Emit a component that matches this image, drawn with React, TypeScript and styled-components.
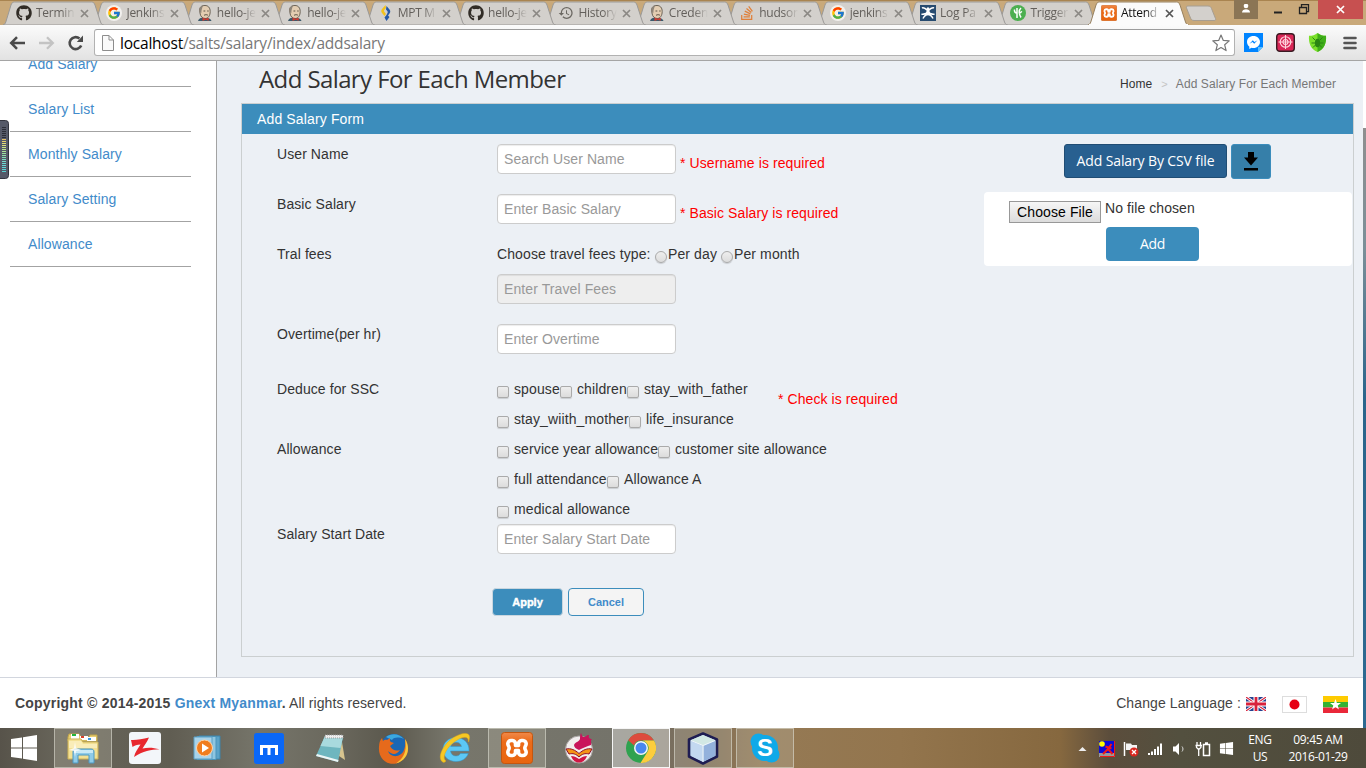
import React from "react";
import styled, { createGlobalStyle, css } from "styled-components";
import { FaGithub, FaStackOverflow, FaWindows } from "react-icons/fa";
import { FcGoogle } from "react-icons/fc";
import { MdHistory } from "react-icons/md";

const GlobalStyle = createGlobalStyle`
  * { box-sizing: border-box; }
  body {
    margin: 0;
    overflow: hidden;
    background: #fff;
    font: 14px/20px "Liberation Sans", Arial, sans-serif;
    color: #333;
  }
`;

const uiFont = css`
  font-family: "Open Sans", "Noto Sans", sans-serif;
`;

const Screen = styled.div`
  width: 1366px;
  height: 768px;
  display: flex;
  flex-direction: column;
  overflow: hidden;
`;

/* ---------- Browser chrome ---------- */

const TabStrip = styled.div`
  height: 25px;
  flex: none;
  display: flex;
  background: #c9a97a;
  border-top: 1px solid #a98450;
  padding-left: 3px;
  position: relative;
`;

const TabBox = styled.div<{ $active?: boolean; $order: number }>`
  position: relative;
  width: 100px;
  height: 24px;
  flex: none;
  margin-right: -9.6px;
  padding: 0 0 0 13px;
  display: flex;
  align-items: center;
  z-index: ${(p) => (p.$active ? 30 : 20 - p.$order)};
`;

const TabShape = styled.svg`
  position: absolute;
  left: 0;
  top: 0;
`;

const TabIcon = styled.span`
  position: relative;
  width: 16px;
  height: 16px;
  display: flex;
  flex: none;
`;

const TabLabel = styled.span<{ $active?: boolean }>`
  ${uiFont}
  position: relative;
  width: 44px;
  flex: none;
  margin-left: 4px;
  white-space: nowrap;
  font-size: 12px;
  line-height: 18px;
  letter-spacing: -0.25px;
  color: ${(p) => (p.$active ? "#111" : "#635f5b")};
  mask-image: linear-gradient(90deg, #000 25px, transparent 39px);
`;

const TabClose = styled.svg`
  position: relative;
  flex: none;
`;

const NewTab = styled.svg`
  margin: 4px 0 0 5px;
`;

const WindowControls = styled.div`
  position: absolute;
  right: 3px;
  top: -1px;
  display: flex;
  height: 19px;
`;

const Control = styled.div<{ $w: number; $bg?: string }>`
  width: ${(p) => p.$w}px;
  background: ${(p) => p.$bg || "transparent"};
  display: flex;
  align-items: center;
  justify-content: center;
`;

const Toolbar = styled.div`
  height: 36px;
  flex: none;
  display: flex;
  align-items: center;
  padding: 0 8px 0 9px;
  background: linear-gradient(#fbfbfb, #e2e2e2);
  border-bottom: 1px solid #a5a5a5;
`;

const AddressBar = styled.div`
  ${uiFont}
  width: 1141px;
  height: 27px;
  margin-left: 9px;
  margin-right: 9px;
  padding: 0 4px 0 7px;
  display: flex;
  align-items: center;
  background: #fff;
  border: 1px solid #b2b2b2;
  border-top-color: #9c9c9c;
  border-radius: 3px;
  font-size: 15.5px;
  line-height: 20px;
  color: #777;
  letter-spacing: -0.22px;
`;

const Url = styled.span`
  flex: 1;
  margin-left: 6px;
  b { font-weight: 400; color: #000; }
`;

const Extensions = styled.div`
  display: flex;
  align-items: center;
  gap: 13px;
  svg:last-child { margin-left: 3px; }
`;

/* ---------- Page ---------- */

const Viewport = styled.div`
  height: 667px;
  flex: none;
  display: flex;
  position: relative;
`;

const Page = styled.div`
  width: 1363px;
  display: flex;
  flex-direction: column;
`;

const ScrollEdge = styled.div`
  width: 3px;
  margin-top: 67px;
  background: linear-gradient(#8f8f8f, #7b8f98 20%, #2a658b 45%, #2d6a91);
`;

const EdgeMeter = styled.svg`
  position: absolute;
  left: 0;
  top: 59px;
`;

const Columns = styled.div`
  height: 616px;
  display: flex;
  overflow: hidden;
`;

const Sidebar = styled.nav`
  width: 217px;
  padding: 0 25px 0 10px;
  margin-top: -19px;
  border-right: 1px solid #a3a3a3;
  background: #fff;
  flex: none;
`;

const NavItem = styled.a`
  display: block;
  height: 45px;
  padding: 12px 0 0 18px;
  border-bottom: 1px solid #a3a3a3;
  color: #428bca;
  letter-spacing: 0.09px;
`;

const Main = styled.main`
  flex: 1;
  background: #ecf0f5;
  padding: 0 9px 0 24px;
`;

const PageHead = styled.header`
  height: 42px;
  display: flex;
  justify-content: space-between;
  padding: 0 18px 0 18px;
`;

const Title = styled.h1`
  ${uiFont}
  margin: 3px 0 0;
  font-size: 24px;
  line-height: 30px;
  font-weight: 400;
  letter-spacing: -0.6px;
  color: #333;
`;

const Crumbs = styled.div`
  margin-top: 13px;
  font-size: 12px;
  letter-spacing: 0.08px;
  color: #777;
  b { font-weight: 400; color: #333; }
  i { font-style: normal; color: #c4c4c4; margin: 0 8px 0 9px; font-size: 11px; }
`;

const Panel = styled.section`
  width: 1113px;
  height: 554px;
  border: 1px solid #cbcfd0;
`;

const PanelTitle = styled.div`
  height: 30px;
  padding: 5px 15px;
  background: #3c8dbc;
  color: #fff;
  letter-spacing: 0.14px;
`;

const PanelBody = styled.div`
  display: flex;
  justify-content: space-between;
  padding: 10px 1px 0 35px;
`;

const Form = styled.form`
  width: 700px;
`;

const Row = styled.div<{ $h: number }>`
  display: flex;
  height: ${(p) => p.$h}px;
`;

const Label = styled.label`
  width: 220px;
  flex: none;
  letter-spacing: 0.08px;
`;

const Input = styled.input`
  width: 179px;
  height: 30px;
  padding: 4px 6px;
  border: 1px solid #ccc;
  border-radius: 4px;
  background: #fff;
  box-shadow: inset 0 1px 1px rgba(0, 0, 0, 0.075);
  font: 14px/20px "Liberation Sans", Arial, sans-serif;
  letter-spacing: 0.1px;
  &::placeholder { color: #999; opacity: 1; }
  &:disabled { background: #eee; }
`;

const ErrorText = styled.span<{ $gap?: number; $top?: number }>`
  margin: ${(p) => p.$top ?? 9}px 0 0 ${(p) => p.$gap ?? 4}px;
  color: #f00;
  letter-spacing: 0.08px;
  white-space: nowrap;
`;

const Line = styled.div`
  display: flex;
  height: 30px;
  white-space: nowrap;
`;

const CheckLines = styled.div<{ $w?: number }>`
  width: ${(p) => p.$w ?? 360}px;
`;

const Box = styled.input`
  appearance: none;
  width: 12px;
  height: 12px;
  margin: 7px 5px 0 0;
  flex: none;
  border: 1px solid #aaa;
  border-radius: ${(p) => (p.type === "radio" ? "50%" : "2px")};
  background: linear-gradient(#eee, #dcdcdc);
  box-shadow: 0 1px 1px rgba(0, 0, 0, 0.15);
`;

const Option = styled.label<{ $w?: number }>`
  display: flex;
  width: ${(p) => (p.$w ? `${p.$w}px` : "auto")};
  letter-spacing: 0.11px;
`;

const RadioOption = styled(Option)`
  ${Box} { margin-right: 1px; }
`;

const Stack = styled.div`
  display: flex;
  flex-direction: column;
`;

const Actions = styled.div`
  display: flex;
  gap: 5px;
  margin: 14px 0 0 215px;
`;

const SmallButton = styled.button<{ $primary?: boolean }>`
  width: ${(p) => (p.$primary ? 71 : 76)}px;
  height: 28px;
  padding: 0;
  border: 1px solid ${(p) => (p.$primary ? "#c9d6df" : "#3c8dbc")};
  border-radius: 4px;
  background: ${(p) => (p.$primary ? "#3c8dbc" : "#f4f4f4")};
  color: ${(p) => (p.$primary ? "#fff" : "#428bca")};
  font: bold 11px/20px "Liberation Sans", Arial, sans-serif;
  ${(p) => p.$primary && "-webkit-text-stroke: 0.4px #fff;"}
`;

const Upload = styled.aside`
  width: 368px;
`;

const UploadButtons = styled.div`
  display: flex;
  gap: 4px;
  padding-left: 80px;
  height: 48px;
`;

const CsvButton = styled.button`
  ${uiFont}
  width: 163px;
  height: 34px;
  padding: 0 0 1px;
  border: 1px solid #204d74;
  border-radius: 3px;
  background: #286090;
  color: #fff;
  font-size: 14px;
  letter-spacing: -0.12px;
  white-space: nowrap;
`;

const DownloadButton = styled.button`
  width: 40px;
  height: 35px;
  padding: 0;
  border: 1px solid #3c8dbc;
  border-radius: 3px;
  background: #367fa9;
  display: flex;
  align-items: center;
  justify-content: center;
`;

const UploadCard = styled.div`
  height: 74px;
  padding: 6px 0 0 25px;
  border-radius: 4px;
  background: #fff;
`;

const FileRow = styled.div`
  display: flex;
  height: 29px;
  gap: 4px;
  letter-spacing: 0.08px;
`;

const FileButton = styled.button`
  width: 92px;
  height: 22px;
  margin-top: 3px;
  padding: 0;
  border: 1px solid #989898;
  background: linear-gradient(#f6f6f6, #dcdcdc);
  color: #000;
  font: 14px/20px "Liberation Sans", Arial, sans-serif;
  letter-spacing: 0.1px;
`;

const AddButton = styled.button`
  ${uiFont}
  display: block;
  width: 93px;
  height: 34px;
  margin-left: 97px;
  padding: 0 0 1px;
  border: 0;
  border-radius: 4px;
  background: #3c8dbc;
  color: #fff;
  font-size: 14px;
  letter-spacing: -0.4px;
`;

const Footer = styled.footer`
  height: 51px;
  padding: 15px 15px 0;
  display: flex;
  justify-content: space-between;
  border-top: 1px solid #d2d6de;
  background: #fff;
  color: #444;
  a { color: #428bca; }
`;

const Copyright = styled.span`
  letter-spacing: 0.08px;
  b { letter-spacing: 0.21px; }
`;

const Languages = styled.div`
  display: flex;
  letter-spacing: 0.11px;
  svg { margin-top: 3px; }
`;

/* ---------- Taskbar ---------- */

const Taskbar = styled.div`
  ${uiFont}
  height: 40px;
  flex: none;
  display: flex;
  align-items: center;
  background: linear-gradient(
    90deg,
    #57534a 0, #68655a 60px, #605d52 170px, #76756a 260px, #69675c 340px, #5b584d 390px,
    #77766b 450px, #74736a 620px, #7c6c58 700px, #957a55 760px, #93754d 900px,
    #86683f 1060px, #5b4d3c 1110px, #53503f 1180px, #4e4a3b 1366px
  );
  color: #fff;
`;

const StartButton = styled.div`
  width: 54px;
  padding: 4px 0 0 11px;
`;

const Task = styled.div<{ $open?: boolean; $focused?: boolean }>`
  position: relative;
  width: 58px;
  height: 40px;
  margin-right: 4px;
  display: flex;
  align-items: center;
  justify-content: center;
  border: 1px solid transparent;
  ${(p) =>
    p.$open &&
    css`
      border-color: rgba(225, 225, 215, 0.55);
      background: rgba(190, 185, 170, 0.3);
    `}
  ${(p) =>
    p.$focused &&
    css`
      border-color: #f5f5f5;
      background: rgba(220, 220, 215, 0.5);
    `}
`;

const Tray = styled.div`
  margin-left: auto;
  padding-right: 10px;
  display: flex;
  align-items: center;
`;

const TrayIcons = styled.div`
  display: flex;
  align-items: center;
  gap: 8px;
  margin-right: 6px;
  svg { margin-top: 1px; }
  svg:first-child { margin-right: 4px; }
`;

const TrayText = styled.div<{ $w: number }>`
  width: ${(p) => p.$w}px;
  text-align: center;
  font-size: 12px;
  line-height: 17px;
  letter-spacing: -0.35px;
  white-space: nowrap;
`;

/* ---------- Drawings ---------- */

const JenkinsIcon = () => (
  <svg width="16" height="16" viewBox="0 0 16 16">
    <path d="M1 16c.5-2 2-3 4-3.300l6 .3c2 .5 3 1.500 3.500 3z" fill="#3c5a6b" />
    <path d="M2.500 5C3 1.500 5 .5 8 .5s5.200 2 5.200 6c0 4-2 7-5 7S3.500 11 3.200 9z" fill="#e3cdb2" stroke="#51473c" strokeWidth=".8" />
    <path d="M2.300 7C1.800 3 3.500 1 6.500.6 5 2 5.300 4 4.600 5L4.300 8z" fill="#8f8579" />
    <path d="M6.500 6h1.800M10.200 6h1.500M7 10.300c1.300-.8 3-.8 4 0" stroke="#51473c" strokeWidth=".9" fill="none" />
    <path d="M5.500 12.500l3 1.200 3.200-1v3l-3-1-3.200 1.200z" fill="#cc3d33" />
  </svg>
);

const MptIcon = () => (
  <svg width="16" height="16" viewBox="0 0 16 16">
    <path d="M7.500 0L4 4c-1 1.500-1 2.500 0 4l2.500 3 1.500-2-1.500-2c-.6-1-.6-1.500 0-2.300L8 3z" fill="#f4c21b" />
    <path d="M8.500 1l3 3.500c1 1.500 1 2.500 0 4L10 10.500l1.500 1.500-3 4-2-3.500 2-2.500 1-2c.4-.8.3-1.300-.2-2L8 4.500z" fill="#2458a8" />
  </svg>
);

const LogIcon = () => (
  <svg width="16" height="16" viewBox="0 0 16 16">
    <rect width="16" height="16" fill="#274b70" />
    <path d="M2 3c2-1 4 1 6 3 2-2 4-4 6-3M1.500 9C4 10 5 8 8 8s4 2 6.500 1M3 13.500c1-2 3-4 5-4s4 2 5 4" stroke="#fff" strokeWidth="1.500" fill="none" />
    <circle cx="8" cy="3.800" r="1.500" fill="#fff" />
    <circle cx="8" cy="8" r="2.200" fill="#fff" />
  </svg>
);

const TriggerIcon = () => (
  <svg width="16" height="16" viewBox="0 0 16 16">
    <circle cx="8" cy="8" r="8" fill="#4caf50" />
    <path d="M7 3v10M6.800 8C5 8 4.300 6.500 4.500 4.500M11 3C9.300 4.500 9 6 9.300 8c.2 2 .7 3 1.700 4.500M9.200 8c1.500 0 2-.7 2.500-1.800" stroke="#fff" strokeWidth="1.500" fill="none" />
  </svg>
);

const GoogleIcon = () => (
  <svg width="16" height="16" viewBox="0 0 16 16">
    <circle cx="8" cy="8" r="8" fill="#f2f0ee" />
    <FcGoogle x="1" y="1" size={14} />
  </svg>
);

const XamppIcon = ({ size = 16 }: { size?: number }) => (
  <svg width={size} height={size} viewBox="0 0 32 32">
    <defs>
      <linearGradient id="xampp" x2="0" y2="1">
        <stop stopColor="#f0894a" />
        <stop offset=".3" stopColor="#ec6b19" />
        <stop offset="1" stopColor="#e8650f" />
      </linearGradient>
    </defs>
    <rect x=".5" y=".5" width="31" height="31" rx="3" fill="url(#xampp)" stroke="#c4560f" />
    <path
      d="M6.800 11.800A3.300 3.300 0 0110 8.500h1.500A3.300 3.300 0 0114.500 12v1.500h3V12a3.300 3.300 0 013-3.500H22a3.300 3.300 0 013.200 3.300c0 2-1.400 2.700-1.400 4.200s1.400 2.200 1.400 4.200A3.300 3.300 0 0122 23.500h-1.500a3.300 3.300 0 01-3-3.500v-1.500h-3V20a3.300 3.300 0 01-3 3.500H10a3.300 3.300 0 01-3.200-3.300c0-2 1.400-2.700 1.400-4.200s-1.400-2.200-1.400-4.200z"
      fill="none" stroke="#fff" strokeWidth="3.600" strokeLinejoin="round"
    />
  </svg>
);

const tabs: { text: string; icon: React.ReactNode }[] = [
  { text: "Termin", icon: <FaGithub size={16} color="#312c26" /> },
  { text: "Jenkins", icon: <GoogleIcon /> },
  { text: "hello-je", icon: <JenkinsIcon /> },
  { text: "hello-je", icon: <JenkinsIcon /> },
  { text: "MPT M", icon: <MptIcon /> },
  { text: "hello-je", icon: <FaGithub size={16} color="#312c26" /> },
  { text: "History", icon: <MdHistory size={16} color="#6b6862" /> },
  { text: "Creden", icon: <JenkinsIcon /> },
  { text: "hudson", icon: <FaStackOverflow size={16} color="#e0803a" /> },
  { text: "jenkins", icon: <GoogleIcon /> },
  { text: "Log Pa", icon: <LogIcon /> },
  { text: "Trigger", icon: <TriggerIcon /> },
  { text: "Attend", icon: <XamppIcon /> },
];

function Tab({ text, icon, index, active }: { text: string; icon: React.ReactNode; index: number; active: boolean }) {
  return (
    <TabBox $active={active} $order={index}>
      <TabShape width="101" height="24" viewBox="0 0 101 24">
        <path
          d="M0 24c1.500-.5 2-1 2.800-3L8 4C8.800 2 9.500 1 11.500 1h77c2 0 2.700 1 3.500 3l5.500 17c.8 2 1.500 2.500 3 3z"
          fill={active ? "#fbfbfb" : "#d3d0cc"}
          stroke={active ? "#97805e" : "#9b9997"}
        />
        {active && <path d="M1 24h99" stroke="#fbfbfb" strokeWidth="2" />}
      </TabShape>
      <TabIcon>{icon}</TabIcon>
      <TabLabel $active={active}>{text}</TabLabel>
      <TabClose width="9" height="9" viewBox="0 0 9 9">
        <path d="M1 1l7 7M8 1L1 8" stroke={active ? "#555" : "#8b8884"} strokeWidth="1.700" />
      </TabClose>
    </TabBox>
  );
}

const BrowserTop = () => (
  <>
    <TabStrip>
      {tabs.map((t, i) => (
        <Tab key={i} {...t} index={i} active={i === tabs.length - 1} />
      ))}
      <NewTab width="34" height="17" viewBox="0 0 34 17">
        <path d="M5 1h20c2 0 3 1 3.500 2.500l4 10c.5 1.500 0 2-1.500 2H11c-2 0-3-1-3.500-2.500l-4-10C3 1.800 3.500 1 5 1z" fill="#d3d0cc" stroke="#a79e91" />
      </NewTab>
      <WindowControls>
        <Control $w={24} $bg="#8b7555">
          <svg width="10" height="12" viewBox="0 0 10 12">
            <circle cx="5" cy="2" r="2.300" fill="#fff" />
            <path d="M1 8.500C1 6 3 5.300 5 5.300S9 6 9 8.500z" fill="#fff" />
          </svg>
        </Control>
        <Control $w={40}>
          <svg width="10" height="14"><path d="M1 8.500h8v2H1z" fill="#222" /></svg>
        </Control>
        <Control $w={12}>
          <svg width="12" height="12" viewBox="0 0 12 12">
            <path d="M1.500 3.500h7v6h-7zM3.500 3V.7h7v7H9" fill="none" stroke="#222" strokeWidth="1.300" />
          </svg>
        </Control>
        <Control $w={8} />
        <Control $w={45} $bg="#c75050">
          <svg width="9" height="9" viewBox="0 0 9 9"><path d="M1 1l7 7M8 1L1 8" stroke="#fff" strokeWidth="1.700" /></svg>
        </Control>
      </WindowControls>
    </TabStrip>
    <Toolbar>
      <svg width="76" height="18" viewBox="0 0 76 18">
        <path d="M16 9H2.500M8 3.200L2.200 9 8 14.800" fill="none" stroke="#4a4a4a" strokeWidth="2.500" />
        <path d="M30 9h13.500M38 3.200L43.800 9 38 14.800" fill="none" stroke="#c3c3c3" strokeWidth="2.300" />
        <path d="M72.200 11.500A6 6 0 1170.500 4.500" fill="none" stroke="#4a4a4a" strokeWidth="2.600" />
        <path d="M67.800 8H74V1.500z" fill="#4a4a4a" />
      </svg>
      <AddressBar>
        <svg width="12" height="16" viewBox="0 0 12 16">
          <path d="M.5.5H7L11.500 5v10.500H.5zM7 .5V5h4.500" fill="#fafafa" stroke="#8d8d8d" />
        </svg>
        <Url><b>localhost</b>/salts/salary/index/addsalary</Url>
        <svg width="18" height="18" viewBox="0 0 18 18">
          <path d="M9 1l2.300 5.400 5.900.5-4.500 3.900 1.400 5.800L9 13.500l-5.100 3.100 1.400-5.800L.8 6.900l5.900-.5z" fill="#fff" stroke="#777" strokeWidth="1.200" strokeLinejoin="round" />
        </svg>
      </AddressBar>
      <Extensions>
        <svg width="19" height="19" viewBox="0 0 19 19">
          <path d="M0 0h19v14l-5 5H0z" fill="#0084ff" />
          <path d="M14 19v-5h5z" fill="#5cc0ff" />
          <path d="M9.500 3C5.800 3 3 5.600 3 8.900c0 1.900.9 3.500 2.300 4.600V16l2.200-1.300c.6.200 1.300.3 2 .3 3.700 0 6.500-2.700 6.500-6S13.200 3 9.500 3z" fill="#fff" />
          <path d="M5.500 10.800L8.800 7.300l1.700 1.700 3-1.700-3.300 3.500-1.700-1.700z" fill="#0084ff" />
        </svg>
        <svg width="19" height="19" viewBox="0 0 19 19">
          <rect x=".7" y=".7" width="17.600" height="17.600" rx="3" fill="#d92656" stroke="#3a1a22" strokeWidth="1.400" />
          <g fill="none" stroke="#ffd6de" strokeWidth="1.100">
            <circle cx="9.500" cy="9" r="5.300" /><circle cx="9.500" cy="9" r="2.500" />
            <path d="M9.500 2v14M2.500 9h14" />
          </g>
        </svg>
        <svg width="19" height="19" viewBox="0 0 19 19">
          <path d="M9.500 0c2.500 2 5 2.800 8.500 2.800C18.500 10 16.500 16 9.500 19 2.500 16 .5 10 1 2.800 4.500 2.800 7 2 9.500 0z" fill="#7be02a" />
          <path d="M9.500 0C12 2 14.500 2.800 18 2.800 18.500 10 16.500 16 9.500 19z" fill="#3fae18" />
          <ellipse cx="9.500" cy="10" rx="2.600" ry="4.200" fill="#2a8512" />
          <path d="M4.500 4.500L7 7M14.500 4.500L12 7M3.500 10H7m5 0h3.500M5 14.500L7.500 12M14 14.500L11.500 12" stroke="#2a8512" />
        </svg>
        <svg width="14" height="14" viewBox="0 0 14 14">
          <path d="M1.500 2h11M1.500 7h11M1.500 12h11" stroke="#555" strokeWidth="2.600" strokeLinecap="round" />
        </svg>
      </Extensions>
    </Toolbar>
  </>
);

const Check = ({ text, w }: { text: string; w?: number }) => (
  <Option $w={w}>
    <Box type="checkbox" />
    {text}
  </Option>
);

const SalaryForm = () => (
  <Form>
    <Row $h={50}>
      <Label>User Name</Label>
      <Input placeholder="Search User Name" />
      <ErrorText>* Username is required</ErrorText>
    </Row>
    <Row $h={50}>
      <Label>Basic Salary</Label>
      <Input placeholder="Enter Basic Salary" />
      <ErrorText>* Basic Salary is required</ErrorText>
    </Row>
    <Row $h={80}>
      <Label>Tral fees</Label>
      <Stack>
        <Line>
          <Option $w={158}>Choose travel fees type:</Option>
          <RadioOption $w={66}><Box type="radio" name="fees" />Per day</RadioOption>
          <RadioOption><Box type="radio" name="fees" />Per month</RadioOption>
        </Line>
        <Input placeholder="Enter Travel Fees" disabled />
      </Stack>
    </Row>
    <Row $h={55}>
      <Label>Overtime(per hr)</Label>
      <Input placeholder="Enter Overtime" />
    </Row>
    <Row $h={60}>
      <Label>Deduce for SSC</Label>
      <CheckLines $w={281}>
        <Line>
          <Check text="spouse" w={63} />
          <Check text="children" w={67} />
          <Check text="stay_with_father" />
        </Line>
        <Line>
          <Check text="stay_wiith_mother" w={132} />
          <Check text="life_insurance" />
        </Line>
      </CheckLines>
      <ErrorText $gap={0} $top={10}>* Check is required</ErrorText>
    </Row>
    <Row $h={85}>
      <Label>Allowance</Label>
      <CheckLines>
        <Line>
          <Check text="service year allowance" w={161} />
          <Check text="customer site allowance" />
        </Line>
        <Line>
          <Check text="full attendance" w={110} />
          <Check text="Allowance A" />
        </Line>
        <Line>
          <Check text="medical allowance" />
        </Line>
      </CheckLines>
    </Row>
    <Row $h={50}>
      <Label>Salary Start Date</Label>
      <Input placeholder="Enter Salary Start Date" />
    </Row>
    <Actions>
      <SmallButton type="button" $primary>Apply</SmallButton>
      <SmallButton type="button">Cancel</SmallButton>
    </Actions>
  </Form>
);

const CsvUpload = () => (
  <Upload>
    <UploadButtons>
      <CsvButton>Add Salary By CSV file</CsvButton>
      <DownloadButton>
        <svg width="14" height="19" viewBox="0 0 14 19">
          <path d="M4 0h6v5.500h4L7 13.500 0 5.500h4zM0 16h14v2.500H0z" fill="#000" />
        </svg>
      </DownloadButton>
    </UploadButtons>
    <UploadCard>
      <FileRow>
        <FileButton>Choose File</FileButton>
        <span>No file chosen</span>
      </FileRow>
      <AddButton>Add</AddButton>
    </UploadCard>
  </Upload>
);

const Flags = () => (
  <svg width="103" height="18" viewBox="0 0 103 18">
    <clipPath id="uk"><path d="M1 1h20v14H1z" /></clipPath>
    <g clipPath="url(#uk)">
      <rect x="1" y="1" width="20" height="14" fill="#25408f" />
      <path d="M1 1l20 14M21 1L1 15" stroke="#fff" strokeWidth="3" />
      <path d="M1 1l20 14M21 1L1 15" stroke="#d8213b" strokeWidth="1.100" />
      <path d="M11 1v14M1 8h20" stroke="#fff" strokeWidth="5" />
      <path d="M11 1v14M1 8h20" stroke="#d8213b" strokeWidth="2.800" />
    </g>
    <rect x="37.500" y=".5" width="24" height="16" fill="#fff" stroke="#ddd" />
    <circle cx="49.500" cy="8.500" r="5" fill="#e60012" />
    <path d="M78 0h25v6H78z" fill="#fecb00" />
    <path d="M78 6h25v5.500H78z" fill="#34b233" />
    <path d="M78 11.500h25V17H78z" fill="#ea2839" />
    <path d="M90.500 3l1.400 4h4.100l-3.300 2.500 1.200 4-3.400-2.400-3.400 2.400 1.200-4L85 7h4.100z" fill="#fff" />
  </svg>
);

const meterColors = ["#2c2e38", "#2c2e38", "#2c2e38", "#2c2e38", "#2c2e38", "#2c2e38", "#e5c068", "#e8d068", "#e2dc74", "#d8e07c", "#cce284", "#bce48c", "#ace494", "#9ce49c", "#90e2a8", "#84e0b4", "#7cdec0", "#74dccc", "#6cdcd4", "#66dad8", "#60d8d8", "#5cd6d6", "#58d4d4"];

const ExplorerIcon = () => (
  <svg width="34" height="32" viewBox="0 0 34 32">
    <path d="M2 5l1-3h10l2 3h8l1-2h7v6H2z" fill="#e8cf72" stroke="#c2a648" />
    <path d="M5 2h8v6H5zM14 4h8v4h-8zM21 5h9v4h-9z" fill="#fff" />
    <path d="M6 2h4v2H6z" fill="#22b43c" /><path d="M15 4h3v2h-3z" fill="#d9412b" /><path d="M22 6h3v2h-3z" fill="#3a97e0" />
    <path d="M2 7h13l2 3h15v17H2z" fill="#f3e093" stroke="#cdb256" />
    <path d="M3 9h12l2 3h14v4H3z" fill="#faedb8" />
    <path d="M7 31V20c0-2 1-3 3-3h15c2 0 3 1 3 3v11h-5v-8H12v8z" fill="#8fcbe8" stroke="#4d98c2" />
    <path d="M8 18h19v3H8z" fill="#c9e9f6" />
    <path d="M9 10l1 6 5 2-5 1-1 6-1-6-5-1 5-2z" fill="#fff" opacity=".8" />
  </svg>
);

const ZapyaIcon = () => (
  <svg width="32" height="32" viewBox="0 0 32 32">
    <rect width="32" height="32" rx="3" fill="#f3f6fa" />
    <path d="M2 8C7 8.500 13 7 20 5.500 18 10 15.500 13 13.500 16.500c5-1.200 10.500-1.200 17 .8C22 17.500 14 19 5 25c1-5 4-8.500 6.500-12.500C8 12.500 5.500 13.700 3.500 15z" fill="#e8282f" />
  </svg>
);

const MediaIcon = () => (
  <svg width="28" height="28" viewBox="0 0 28 28">
    <path d="M6 2h21v23H6z" fill="#5ba3c8" stroke="#3c86ae" />
    <path d="M4 2.500h19v23H4z" fill="#8fc6e0" stroke="#4a94ba" />
    <path d="M1 3h18v22H1z" fill="#a8d3ea" stroke="#5a9fc4" />
    <circle cx="11.500" cy="14" r="8" fill="#f07d1e" stroke="#fbd7b0" />
    <path d="M9 9.500v9l7-4.500z" fill="#fff" />
  </svg>
);

const MaxthonIcon = () => (
  <svg width="30" height="31" viewBox="0 0 30 31">
    <rect width="30" height="31" rx="2.500" fill="#0a67f7" />
    <path d="M7.500 22v-8.500h15V22M15 13.500V22" fill="none" stroke="#fff" strokeWidth="3" />
  </svg>
);

const NotepadIcon = () => (
  <svg width="32" height="30" viewBox="0 0 32 30">
    <path d="M26 3l4 24-6-4z" fill="#d7c48e" />
    <path d="M10 3L1 23l22 6 5-25z" fill="#6eb6bf" />
    <path d="M10 3L5.500 13 25.500 15 28 4z" fill="#a9dade" />
    <path d="M10 2h18v3H10z" fill="#eee" stroke="#999" strokeDasharray="1 1" />
    <path d="M1 23l22 6 .5-2L2 21z" fill="#eef6f6" />
  </svg>
);

const FirefoxIcon = () => (
  <svg width="31" height="31" viewBox="0 0 31 31">
    <circle cx="16" cy="14.500" r="13.500" fill="#1b67b4" />
    <path d="M8 4c5-4 13-4 18 2-5-2-10-2-12 1z" fill="#3ba8df" />
    <path d="M27 6c6 9 3 21-9 24.500C8 32.500 0 25 1 14c0-4 1-7 3-9l1 3c1-1 3-1.500 4-1l3-2c0 2-.5 3 1 4l3 1-4 3c3 5 6 5 10 4-4 6-9 4-12 1 2 7 13 7 16-1 1.500-4 1.500-7 1-11z" fill="#e66a1c" />
    <path d="M27 6c6 9 3 21-9 24.500 9-6 11-14 9-24.500z" fill="#f8c93c" />
  </svg>
);

const IeIcon = () => (
  <svg width="32" height="32" viewBox="0 0 32 32">
    <path
      d="M30 19H11.500c.3 3 2.500 5 5.500 5 2 0 3.500-.8 4.500-2.500h7.800C27.500 26.500 23 29.500 17 29.500 9.500 29.500 4 24.500 4 17.500S9.500 5.500 17 5.500 30.500 11 30 19zM11.700 14.500h10.800c-.4-2.600-2.400-4.200-5.300-4.200s-5 1.600-5.500 4.200z"
      fill="#5cc8f5" stroke="#2e9ad4" strokeWidth=".5" fillRule="evenodd"
    />
    <path d="M5 30.500C-3 28 3 13.500 13 6.500 21 1 31-1 30.500 5.500c0 1.500-.5 3-1 4.500.5-6-5-6-12-1.500C8 14 2 26 7 29z" fill="#f6c824" stroke="#e2ac14" strokeWidth=".5" />
  </svg>
);

const RedBallIcon = () => (
  <svg width="32" height="32" viewBox="0 0 32 32">
    <circle cx="16" cy="17.500" r="13.500" fill="#f1eeee" stroke="#a9a4a4" />
    <path d="M11 13c1-3 5-3 6-6 0-2 0-4 1-6 1 2 1 4 3 4s2-2 5-2c-1 3 1 4 3 4-2 2 0 4-1 6-4 1-8 3-12 5-3-1-5-3-5-5z" fill="#c9145b" />
    <path d="M3 17c5-1 9 1 13 4.500C20 18 24 16 29 17l-3 5c-4-1-7 0-10 3-3-3-6-4-10-3z" fill="#f59416" stroke="#8f0e2d" />
    <path d="M8 24c3 0 5 1 8 3 3-2 5-3 8-3-2 5-5 6.500-8 6.500S10 29 8 24z" fill="#d11745" />
  </svg>
);

const ChromeIcon = () => (
  <svg width="30" height="30" viewBox="0 0 30 30">
    <circle cx="15" cy="15" r="15" fill="#2fa24f" />
    <path d="M15 0a15 15 0 0113 7.500H15a7.500 7.500 0 00-7 5L2.200 7.200A15 15 0 0115 0z" fill="#dd4b3e" />
    <path d="M28 7.500A15 15 0 0114.500 30l7-11.200A7.500 7.500 0 0020 9.500l-3-2z" fill="#fccd3d" />
    <circle cx="15" cy="15" r="7" fill="#f5f5f5" />
    <circle cx="15" cy="15" r="5.500" fill="#4787ee" />
  </svg>
);

const NetbeansIcon = () => (
  <svg width="32" height="33" viewBox="0 0 32 33">
    <path d="M16 1.500l14 6v17L16 31.500 2 24.500v-17z" fill="#b6cfe9" stroke="#1e1c52" strokeWidth="2.600" strokeLinejoin="round" />
    <path d="M16 3l12 5-12 5.500L4 8z" fill="#d2e8e4" />
    <path d="M4 9l11.500 5v15.500L4 24z" fill="#c3d8f0" />
    <path d="M28 9l-11.500 5v15.500L28 24z" fill="#93b1dc" />
    <path d="M4 8.500l12 5 12-5M16 13.500V30" stroke="#f0f6fa" fill="none" />
  </svg>
);

const SkypeText = styled.span`
  position: absolute;
  font: bold 24px/30px "Liberation Sans", Arial, sans-serif;
`;

const SkypeIcon = () => (
  <>
    <svg width="30" height="30" viewBox="0 0 30 30">
      <circle cx="15" cy="15" r="13" fill="#0fa9e8" />
      <circle cx="8.500" cy="8.500" r="8" fill="#0fa9e8" />
      <circle cx="21.500" cy="21.500" r="8" fill="#0fa9e8" />
    </svg>
    <SkypeText>S</SkypeText>
  </>
);

const tasks: { icon: React.ReactNode; open?: boolean; focused?: boolean }[] = [
  { icon: <ExplorerIcon />, open: true },
  { icon: <ZapyaIcon /> },
  { icon: <MediaIcon /> },
  { icon: <MaxthonIcon /> },
  { icon: <NotepadIcon /> },
  { icon: <FirefoxIcon /> },
  { icon: <IeIcon /> },
  { icon: <XamppIcon size={32} />, open: true },
  { icon: <RedBallIcon /> },
  { icon: <ChromeIcon />, open: true, focused: true },
  { icon: <NetbeansIcon />, open: true },
  { icon: <SkypeIcon />, open: true },
];

const SystemTray = () => (
  <Tray>
    <TrayIcons>
      <svg width="9" height="6"><path d="M4.500 1L8.500 5h-8z" fill="#eee" /></svg>
      <svg width="16" height="16" viewBox="0 0 16 16">
        <rect width="16" height="16" fill="#0b0bd8" />
        <circle cx="3" cy="3" r="2.800" fill="#ff0" />
        <path d="M0 12h16v4H0z" fill="#9a9a9a" />
        <path d="M15.500 0v15.500H1" stroke="#f01818" fill="none" />
        <path d="M12.500 3L9 8l-5 5M9 8l4.500 5M6.500 5.500l6 2" stroke="#f01818" strokeWidth="2" fill="none" />
      </svg>
      <svg width="16" height="16" viewBox="0 0 16 16">
        <path d="M1.500 1v14" stroke="#fff" strokeWidth="1.500" />
        <path d="M3 2.500h5l1 1.500h5v6H8L7 9H3z" fill="#f4f4f4" />
        <circle cx="11" cy="11" r="4.500" fill="#d8271f" />
        <path d="M9 9l4 4M13 9l-4 4" stroke="#fff" strokeWidth="1.300" />
      </svg>
      <svg width="16" height="14" viewBox="0 0 16 14">
        <path d="M1 13v-2h2v2zM4 13V9.500h2V13zM7 13V7h2v6zM10 13V4.500h2V13zM13 13V1.500h2V13z" fill="#fff" />
      </svg>
      <svg width="16" height="16" viewBox="0 0 16 16">
        <path d="M2 5.500h2.500L8 2v12l-3.500-3.500H2z" fill="#fff" />
        <path d="M11 5.500c1.300 1.500 1.300 3.500 0 5" stroke="#ddd" fill="none" />
      </svg>
      <svg width="16" height="16" viewBox="0 0 16 16">
        <path d="M8.500 3.500h6v11h-6zM10 2h3" fill="none" stroke="#fff" strokeWidth="1.500" />
        <path d="M2 1v3M5.500 1v3M.5 4.500h6.500M1.500 4.500v2l2.200 2 2.200-2v-2M3.700 8v7" fill="none" stroke="#fff" strokeWidth="1.300" />
      </svg>
      <FaWindows size={15} />
    </TrayIcons>
    <TrayText $w={40}>ENG<br />US</TrayText>
    <TrayText $w={76}>09:45 AM<br />2016-01-29</TrayText>
  </Tray>
);

export default function App() {
  return (
    <Screen>
      <GlobalStyle />
      <BrowserTop />
      <Viewport>
        <Page>
          <Columns>
            <Sidebar>
              {["Add Salary", "Salary List", "Monthly Salary", "Salary Setting", "Allowance"].map((t) => (
                <NavItem key={t}>{t}</NavItem>
              ))}
            </Sidebar>
            <Main>
              <PageHead>
                <Title>Add Salary For Each Member</Title>
                <Crumbs><b>Home</b><i>&gt;</i>Add Salary For Each Member</Crumbs>
              </PageHead>
              <Panel>
                <PanelTitle>Add Salary Form</PanelTitle>
                <PanelBody>
                  <SalaryForm />
                  <CsvUpload />
                </PanelBody>
              </Panel>
            </Main>
          </Columns>
          <Footer>
            <Copyright><b>Copyright © 2014-2015 <a>Gnext Myanmar</a>.</b> All rights reserved.</Copyright>
            <Languages>Change Language :&nbsp;<Flags /></Languages>
          </Footer>
        </Page>
        <ScrollEdge />
        <EdgeMeter width="9" height="59" viewBox="0 0 9 59">
          <path d="M-1 .5h6.500q3 0 3 3v52q0 3-3 3H-1z" fill="#565a69" stroke="#33353f" />
          {meterColors.map((c, i) => (
            <rect key={i} x="2" y={7 + i * 2} width="4" height="1" fill={c} />
          ))}
        </EdgeMeter>
      </Viewport>
      <Taskbar>
        <StartButton>
          <svg width="26" height="26" viewBox="0 0 26 26">
            <path d="M0 4l11-1.600V12.500H0zM12 2.200L26 0v12.500H12zM0 13.500h11v10L0 22zM12 13.500h14V26l-14-2.200z" fill="#fff" />
          </svg>
        </StartButton>
        {tasks.map((t, i) => (
          <Task key={i} $open={t.open} $focused={t.focused}>{t.icon}</Task>
        ))}
        <SystemTray />
      </Taskbar>
    </Screen>
  );
}
